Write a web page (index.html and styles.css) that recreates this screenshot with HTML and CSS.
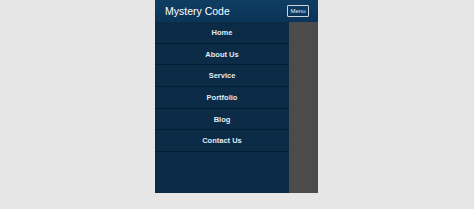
FILE: index.html
```html
<!DOCTYPE html>
<html lang="en">
<head>
    <meta charset="UTF-8">
    <meta name="viewport" content="width=device-width, initial-scale=1.0">
    <title>Mystery Code</title>
    <link rel="stylesheet" href="styles.css">
</head>
<body>
    <div class="telefono">
        <header class="cabecera">
            <span class="titulo">Mystery Code</span>
            <button class="menu">Menu</button>
        </header>
        <div class="contenido">
            <nav class="navegacion">
                <a href="#">Home</a>
                <a href="#">About Us</a>
                <a href="#">Service</a>
                <a href="#">Portfolio</a>
                <a href="#">Blog</a>
                <a href="#">Contact Us</a>
            </nav>
            <div class="pagina"></div>
        </div>
    </div>
</body>
</html>
```

FILE: styles.css
```css
body {
    display: flex;
    justify-content: center;
    margin: 0;
    height: 209px;
    background-color: #e6e6e6;
    font-family: "Liberation Sans", Arial, sans-serif;
}
.telefono {
    display: flex;
    flex-direction: column;
    width: 163px;
    height: 193px;
    margin-right: 1px;
}
.cabecera {
    display: flex;
    justify-content: space-between;
    align-items: center;
    height: 22px;
    padding: 0 9px 0 10px;
    background: linear-gradient(#0f3d63, #0b3558);
}
.titulo {
    color: #ffffff;
    font-size: 10.5px;
}
.menu {
    border: 1px solid #c9d6e2;
    background-color: transparent;
    color: #e6eef5;
    font-family: inherit;
    font-size: 6px;
    padding: 1px 2px;
    height: 12px;
    width: 22px;
    border-radius: 1px;
}
.contenido {
    display: flex;
    flex: 1;
}
.navegacion {
    display: flex;
    flex-direction: column;
    width: 134px;
    background-color: #0b2b47;
}
.navegacion a {
    display: flex;
    justify-content: center;
    align-items: center;
    height: 20.7px;
    border-bottom: 1px solid #061d31;
    color: #e3eaf1;
    font-size: 7.5px;
    font-weight: bold;
    text-decoration: none;
}
.pagina {
    flex: 1;
    background-color: #4b4b4b;
}
```
